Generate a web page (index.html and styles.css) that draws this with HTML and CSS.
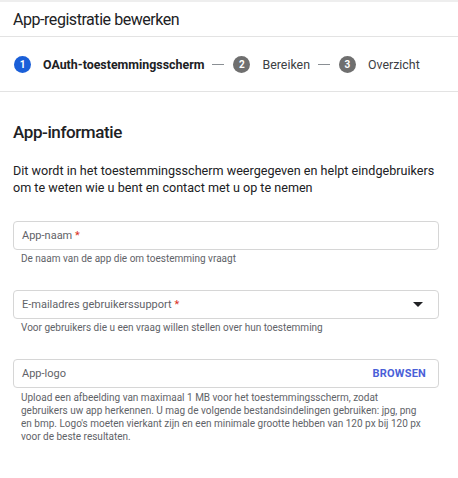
FILE: index.html
```html
<!DOCTYPE html>
<html lang="nl">
<head>
<meta charset="utf-8">
<title>App-registratie bewerken</title>
<link rel="stylesheet" href="styles.css">
</head>
<body>
<header class="topbar">
  <h1 class="title">App-registratie bewerken</h1>
</header>
<nav class="stepper">
  <span class="step-num active">1</span>
  <span class="step-label active">OAuth-toestemmingsscherm</span>
  <span class="dash"></span>
  <span class="step-num">2</span>
  <span class="step-label">Bereiken</span>
  <span class="dash"></span>
  <span class="step-num">3</span>
  <span class="step-label">Overzicht</span>
</nav>
<main class="content">
  <h2 class="section-title">App-informatie</h2>
  <p class="intro">Dit wordt in het toestemmingsscherm weergegeven en helpt eindgebruikers om te weten wie u bent en contact met u op te nemen</p>

  <div class="field">
    <div class="box"><span class="label">App-naam <span class="req">*</span></span></div>
    <div class="hint">De naam van de app die om toestemming vraagt</div>
  </div>

  <div class="field">
    <div class="box"><span class="label">E-mailadres gebruikerssupport <span class="req">*</span></span>
      <svg class="caret" width="10" height="5" viewBox="0 0 10 5"><path d="M0 0h10L5 5z" fill="#202124"/></svg>
    </div>
    <div class="hint">Voor gebruikers die u een vraag willen stellen over hun toestemming</div>
  </div>

  <div class="field">
    <div class="box"><span class="label">App-logo</span><span class="browse">BROWSEN</span></div>
    <div class="hint multi">Upload een afbeelding van maximaal 1 MB voor het toestemmingsscherm, zodat gebruikers uw app herkennen. U mag de volgende bestandsindelingen gebruiken: jpg, png en bmp. Logo's moeten vierkant zijn en een minimale grootte hebben van 120 px bij 120 px voor de beste resultaten.</div>
  </div>
</main>
</body>
</html>
```
FILE: styles.css
```css
html, body {
  margin: 0;
  padding: 0;
  background: #fff;
}
body {
  font-family: Roboto, "Liberation Sans", Arial, sans-serif;
  color: #202124;
  border-top: 2px solid #eeeeee;
}
.topbar {
  height: 34px;
  border-bottom: 1px solid #e3e3e3;
  display: flex;
  align-items: center;
  padding-left: 13px;
}
.title {
  margin: 0;
  font-size: 16px;
  font-weight: 400;
  letter-spacing: -0.45px;
  color: #202124;
}
.stepper {
  height: 54px;
  border-bottom: 1px solid #e3e3e3;
  display: flex;
  align-items: center;
  padding-left: 14px;
  font-size: 12.4px;
}
.step-num {
  width: 17px;
  height: 17px;
  border-radius: 50%;
  background: #6f6f6f;
  color: #fff;
  font-size: 10px;
  font-weight: 700;
  display: flex;
  align-items: center;
  justify-content: center;
  margin-right: 12px;
}
.step-num.active {
  background: #1a5fd8;
}
.step-label {
  color: #3c4043;
}
.step-label.active {
  font-weight: 700;
  color: #202124;
}
.dash {
  width: 12px;
  height: 1px;
  background: #8a8f94;
  margin: 1px 9px 0 8px;
}
.content {
  padding: 0 19px 0 13px;
}
.section-title {
  margin: 30px 0 0;
  font-size: 17px;
  font-weight: 500;
  letter-spacing: -0.4px;
  line-height: 20px;
}
.intro {
  margin: 21px 0 0;
  font-size: 12.6px;
  line-height: 16.5px;
  color: #202124;
}
.field {
  margin-top: 25px;
}
.field + .field {
  margin-top: 25px;
}
.box {
  height: 27px;
  border: 1px solid #d6d6d6;
  border-radius: 4px;
  display: flex;
  align-items: center;
  justify-content: space-between;
  padding: 0 12px 0 8px;
}
.label {
  font-size: 11px;
  color: #5f6368;
}
.req {
  color: #d93025;
}
.caret {
  margin-right: 3px;
}
.browse {
  font-size: 11px;
  font-weight: 700;
  color: #4a5fd8;
  letter-spacing: 0.2px;
}
.hint {
  padding-left: 8px;
  margin-top: 3px;
  font-size: 10px;
  line-height: 12px;
  color: #5f6368;
}
.hint.multi {
  padding-right: 14px;
  margin-top: 3px;
  line-height: 13px;
}
```
